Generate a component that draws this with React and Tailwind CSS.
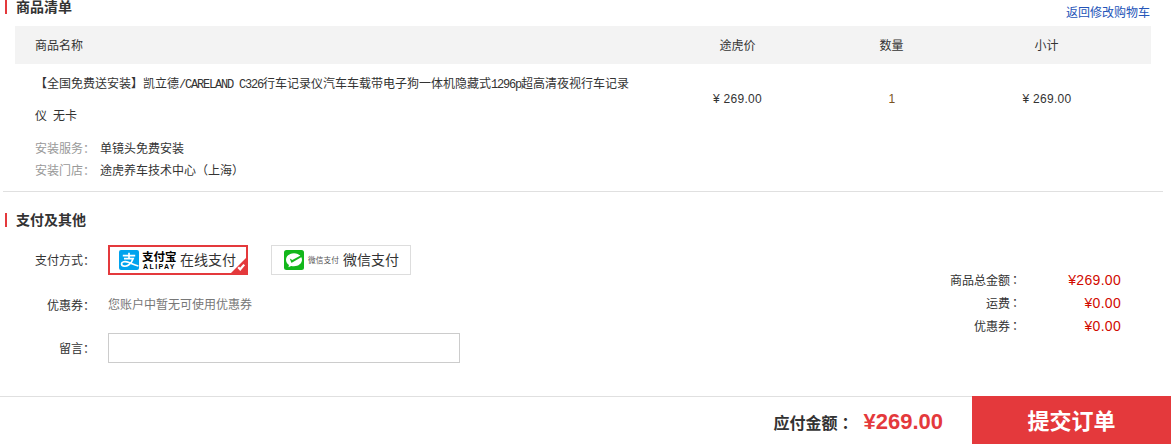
const Latin = ({ children }) => (
  <span className="font-['Liberation_Mono',monospace] text-[12px] leading-none tracking-[-1.2px] whitespace-pre">{children}</span>
);

const Title = ({ children }) => (
  <h2 className="flex h-[14px] items-center border-l-2 border-[#e4393c] pl-[9px] text-sm leading-[14px] font-bold text-[#333]">
    {children}
  </h2>
);

const AlipayLogo = () => (
  <svg className="h-5 w-5 shrink-0" viewBox="0 0 20 20" fill="none">
    <rect width="20" height="20" rx="2" fill="#00a3ee" />
    <path d="M3.8 5.6h12.4M10 2.8v5.8M5 8.6h9.2c-.9 2.8-2.5 4.9-4.6 6.4-2.5 1.8-6.7 1.7-7-.9-.3-2.6 3.8-3.1 6.8-1.9 3.3 1.3 6 2.8 10 3.8" stroke="#fff" strokeWidth="1.7" />
  </svg>
);

const WechatLogo = () => (
  <svg className="h-5 w-5 shrink-0" viewBox="0 0 20 20">
    <rect width="20" height="20" rx="2.5" fill="#13b71b" />
    <path d="M10 3.2c-4.5 0-8 2.9-8 6.6 0 2.1 1.2 4 3 5.2l-.6 2.3 2.7-1.4c.9.3 1.9.4 2.9.4 4.5 0 8-2.9 8-6.5s-3.5-6.6-8-6.6Z" fill="#fff" />
    <path d="M5.8 8.4 8.3 9.9 16.6 5.6 17.6 7 8.2 12.6c-.5.3-.9.1-1.1-.4Z" fill="#13b71b" />
  </svg>
);

const Total = ({ label, value }) => (
  <div className="flex h-[23px] items-center justify-end">
    <span>
      {label}
      <span className="-ml-px font-['Noto_Sans_CJK_TC',sans-serif]">：</span>
    </span>
    <span className="w-[100px] pb-px text-right font-['Liberation_Sans',sans-serif] text-sm leading-5 tracking-[0.3px] text-[#d10a00]">{value}</span>
  </div>
);

export default function App() {
  return (
    <div className="flex h-[444px] w-[1171px] flex-col overflow-hidden bg-white font-['Liberation_Sans','Noto_Sans_CJK_SC',sans-serif] text-xs text-[#333]">
      <section className="ml-[3px] h-[192px] w-[1160px] shrink-0 border-b border-[#e0e0e0]">
        <div className="flex h-[26px] items-start justify-between pr-[13px] pl-[2px]">
          <Title>商品清单</Title>
          <a className="pt-[5px] leading-4 text-[#2354b8]">返回修改购物车</a>
        </div>
        <div className="ml-3 w-[1136px]">
          <div className="flex h-[38px] items-center bg-[#f3f3f3] pt-[2px]">
            <span className="w-[645px] pl-5">商品名称</span>
            <span className="w-[155px] text-center">途虎价</span>
            <span className="w-[153px] text-center">数量</span>
            <span className="w-[157px] text-center">小计</span>
          </div>
          <div className="flex pt-[3px]">
            <div className="w-[645px] pt-px pl-5">
              <div className="leading-8 whitespace-nowrap">
                <p className="h-8">
                  【全国免费送安装】凯立德<Latin>/CARELAND C326</Latin>行车记录仪汽车车载带电子狗一体机隐藏式<Latin>1296p</Latin>超高清夜视行车记录
                </p>
                <p className="h-8">仪<Latin> </Latin>无卡</p>
              </div>
              <div className="mt-[6px] leading-[22px]">
                <p className="flex h-[22px]"><span className="w-[65px] text-[#999]">安装服务：</span>单镜头免费安装</p>
                <p className="flex h-[22px]"><span className="w-[65px] text-[#999]">安装门店：</span>途虎养车技术中心（上海）</p>
              </div>
            </div>
            <div className="flex h-16 items-center tracking-[0.3px]">
              <span className="w-[155px] text-center">¥ 269.00</span>
              <span className="w-[154px] text-center text-[#7a5320]">1</span>
              <span className="w-[156px] text-center">¥ 269.00</span>
            </div>
          </div>
        </div>
      </section>

      <section className="h-[204px] shrink-0 pt-[21px] pl-[5px]">
        <Title>支付及其他</Title>
        <div className="flex justify-between pt-[18px] pr-[50px]">
          <div className="flex flex-col">
            <div className="flex h-[30px] items-center">
              <span className="w-[103px] pt-[2px] pr-[13px] text-right">支付方式：</span>
              <button className="relative flex h-[30px] w-[140px] items-center border-2 border-[#e4393c] pl-[9px] text-sm">
                <AlipayLogo />
                <span className="ml-[3px] flex w-[35px] flex-col text-black">
                  <span className="h-[12px] text-left text-[11.5px] leading-[12px] font-bold whitespace-nowrap">支付宝</span>
                  <span className="h-[7px] pl-px text-left text-[7px] leading-[7px] font-bold tracking-[1.4px]">ALIPAY</span>
                </span>
                <span className="ml-[3px] whitespace-nowrap">在线支付</span>
                <svg className="absolute right-0 bottom-0 h-[15px] w-[15px]" viewBox="0 0 15 15">
                  <path d="M15 0v15H0Z" fill="#e4393c" />
                  <path d="m7.2 9.3 2 2 4-4.7" stroke="#fff" strokeWidth="2.2" fill="none" />
                </svg>
              </button>
              <button className="ml-[23px] flex h-[30px] w-[140px] items-center border border-[#ddd] pl-3 text-sm">
                <WechatLogo />
                <span className="ml-[4px] w-[31px] pt-px text-[7.7px] leading-[10px] whitespace-nowrap text-[#555]">微信支付</span>
                <span className="ml-[4px] whitespace-nowrap">微信支付</span>
              </button>
            </div>
            <div className="mt-[15px] flex h-[30px] items-center">
              <span className="w-[103px] pt-[2px] pr-[13px] text-right">优惠券：</span>
              <span className="text-[#777]">您账户中暂无可使用优惠券</span>
            </div>
            <div className="mt-[13px] flex h-[30px] items-center">
              <span className="w-[103px] pt-[2px] pr-[13px] text-right">留言：</span>
              <input className="h-[30px] w-[352px] border border-[#ccc] bg-white outline-none" aria-label="留言" />
            </div>
          </div>
          <div className="pt-6">
            <Total label="商品总金额" value="¥269.00" />
            <Total label="运费" value="¥0.00" />
            <Total label="优惠券" value="¥0.00" />
          </div>
        </div>
      </section>

      <footer className="flex h-12 shrink-0 justify-end">
        <div className="flex flex-1 items-center justify-end border-t border-[#e0e0e0] pr-[29px] pt-[3px] font-bold">
          <span className="pt-px text-base">
            应付金额<span className="font-['Noto_Sans_CJK_TC',sans-serif]">：</span>
          </span>
          <span className="ml-[10px] text-[22px] leading-none text-[#e4393c]">¥269.00</span>
        </div>
        <button className="w-[199px] bg-[#e4393c] pt-[3px] text-[22px] font-bold text-white">提交订单</button>
      </footer>
    </div>
  );
}
